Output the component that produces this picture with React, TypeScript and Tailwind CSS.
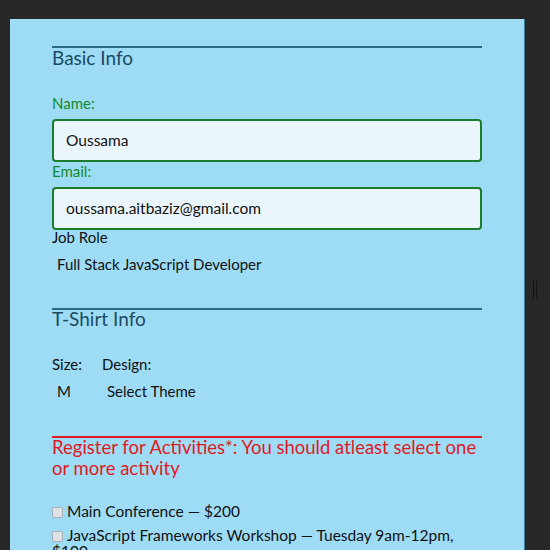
export default function App() {
  return (
    <div className="relative h-[550px] w-[550px] overflow-hidden bg-[#272727] font-['Lato','Open_Sans',sans-serif]">
      <div className="ml-[10px] mt-[19px] h-[560px] w-[515px] border-r border-[#3a7d98] bg-[#9edcf6] px-[42px] pt-[27px]">
        <div className="border-t-2 border-[#2b6a84]" />
        <h2 className="text-[19px] leading-[20px] text-[#1b4a60]">Basic Info</h2>

        <label className="mt-[27px] block text-[15px] leading-[16px] text-[#128a2a]">Name:</label>
        <div className="mt-[8px] flex h-[43px] items-center rounded-[4px] border-2 border-[#1b7d2c] bg-[#ebf6fc] px-[12px] text-[15.5px] text-[#111]">
          Oussama
        </div>
        <label className="mt-[1px] block text-[15px] leading-[16px] text-[#128a2a]">Email:</label>
        <div className="mt-[8px] flex h-[43px] items-center rounded-[4px] border-2 border-[#1b7d2c] bg-[#ebf6fc] px-[12px] text-[15.5px] text-[#111]">
          oussama.aitbaziz@gmail.com
        </div>
        <p className="-mt-[1px] text-[15px] leading-[16px] text-[#111]">Job Role</p>
        <p className="mt-[11px] pl-[5px] text-[15px] leading-[16px] text-[#111]">Full Stack JavaScript Developer</p>

        <div className="mt-[36px] border-t-2 border-[#2b6a84]" />
        <h2 className="-mt-[1px] text-[19px] leading-[20px] text-[#1b4a60]">T-Shirt Info</h2>

        <div className="mt-[27px] flex text-[15px] leading-[16px] text-[#111]">
          <span className="w-[50px]">Size:</span>
          <span>Design:</span>
        </div>
        <div className="mt-[11px] flex text-[15px] leading-[16px] text-[#111]">
          <span className="w-[55px] pl-[5px]">M</span>
          <span>Select Theme</span>
        </div>

        <div className="mt-[37px] border-t-2 border-[#e01a22]" />
        <h2 className="-mt-[1px] text-[18.5px] leading-[21px] text-[#e01a22]">
          Register for Activities*: You should atleast select one or more activity
        </h2>

        <div className="mt-[24px] flex flex-col gap-[8px] text-[15.5px] leading-[16px] text-[#111]">
          <label className="block">
            <span className="mr-[4px] inline-block h-[11px] w-[11px] rounded-[2px] border border-[#a9b0b8] bg-[#dfe3e8] align-[-1px]" />
            Main Conference — $200
          </label>
          <label className="block max-w-[415px]">
            <span className="mr-[4px] inline-block h-[11px] w-[11px] rounded-[2px] border border-[#a9b0b8] bg-[#dfe3e8] align-[-1px]" />
            JavaScript Frameworks Workshop — Tuesday <span className="whitespace-nowrap">9am-12pm,</span> $100
          </label>
        </div>
      </div>
      <div className="absolute left-[533px] top-[281px] flex gap-[2px]">
        <div className="h-[18px] w-[1px] bg-[#111]" />
        <div className="h-[18px] w-[1px] bg-[#111]" />
      </div>
    </div>
  );
}
